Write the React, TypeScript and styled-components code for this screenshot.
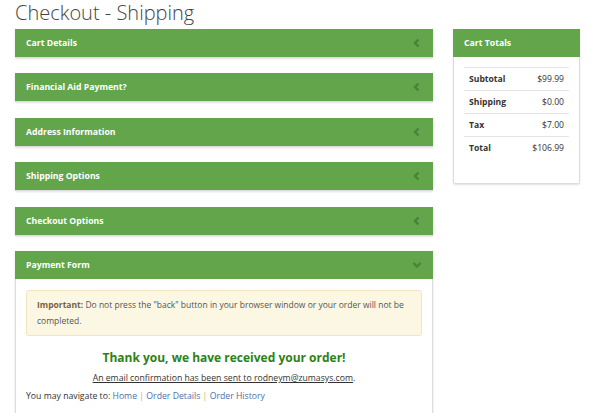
import React from "react";
import styled, { createGlobalStyle } from "styled-components";

const GlobalStyle = createGlobalStyle`
  body {
    margin: 0;
    background: #fff;
    font-family: "Open Sans", "Liberation Sans", sans-serif;
    color: #333;
  }
`;

const Page = styled.div`
  padding: 0 17px 0 15px;
`;

const Title = styled.h1`
  margin: 0;
  height: 28px;
  font-size: 20px;
  line-height: 26px;
  font-weight: 300;
  color: #444;
`;

const Layout = styled.div`
  display: grid;
  grid-template-columns: 418px 127px;
  column-gap: 20px;
  align-items: start;
  padding-top: 1px;
`;

const Column = styled.div`
  display: flex;
  flex-direction: column;
`;

const Panel = styled.div`
  margin-bottom: 15.4px;
  border: 1px solid #dcdcdc;
  border-top: none;
  box-shadow: 0 1px 2px rgba(0, 0, 0, 0.12);
  background: #fff;
`;

const PanelHeader = styled.div`
  display: flex;
  align-items: center;
  justify-content: space-between;
  height: 28px;
  margin: 0 -1px;
  padding: 0 11px 0 11px;
  background: #62a54b;
  color: #fff;
  font-size: 8.7px;
  font-weight: 700;
`;

const Chevron = ({ open }: { open?: boolean }) => (
  <svg width="10" height="10" viewBox="0 0 10 10">
    <polyline
      points={open ? "1.5,3 5,6.5 8.5,3" : "6.5,1.5 3,5 6.5,8.5"}
      fill="none"
      stroke="#4a8238"
      strokeWidth="2.4"
    />
  </svg>
);

const PanelBody = styled.div`
  padding: 11px 10px 10px 10px;
  font-size: 8.7px;
`;

const Alert = styled.div`
  background: #fcf7e3;
  border: 1px solid #f3e6bf;
  border-radius: 3px;
  padding: 6px 8px 6px 10px;
  font-size: 8.5px;
  line-height: 16px;
  color: #555;

  b {
    color: #7a6040;
    font-weight: 700;
  }
`;

const ThankYou = styled.h2`
  margin: 13px 0 0;
  text-align: center;
  font-size: 12px;
  font-weight: 700;
  color: #2c8216;
  line-height: 18px;
`;

const Confirmation = styled.p`
  margin: 3px 0 0;
  text-align: center;
  line-height: 16px;
  color: #333;

  span {
    text-decoration: underline;
  }
`;

const Nav = styled.p`
  margin: 2px 0 0;
  line-height: 16px;
  color: #333;
`;

const NavLink = styled.a`
  color: #4a6fa8;
  text-decoration: none;
`;

const Sep = styled.span`
  color: #e0a070;
`;

const TotalsCard = styled.div`
  border: 1px solid #dcdcdc;
  border-top: none;
  border-radius: 2px;
  box-shadow: 0 1px 2px rgba(0, 0, 0, 0.12);
  padding-bottom: 24px;
`;

const TotalsBody = styled.div`
  padding: 10px 10px 0 10px;
`;

const Row = styled.div`
  display: flex;
  justify-content: space-between;
  align-items: center;
  height: 22px;
  padding: 0 5px;
  border-top: 1px solid #e4e4e4;
  font-size: 8.6px;
`;

const Label = styled.span`
  font-weight: 700;
  color: #333;
`;

const Value = styled.span`
  color: #333;
`;

const collapsed = [
  "Cart Details",
  "Financial Aid Payment?",
  "Address Information",
  "Shipping Options",
  "Checkout Options",
];

const totals = [
  ["Subtotal", "$99.99"],
  ["Shipping", "$0.00"],
  ["Tax", "$7.00"],
  ["Total", "$106.99"],
];

export default function App() {
  return (
    <Page>
      <GlobalStyle />
      <Title>Checkout - Shipping</Title>
      <Layout>
        <Column>
          {collapsed.map((name) => (
            <Panel key={name}>
              <PanelHeader>
                {name}
                <Chevron />
              </PanelHeader>
            </Panel>
          ))}
          <Panel>
            <PanelHeader>
              Payment Form
              <Chevron open />
            </PanelHeader>
            <PanelBody>
              <Alert>
                <b>Important:</b> Do not press the "back" button in your browser
                window or your order will not be completed.
              </Alert>
              <ThankYou>Thank you, we have received your order!</ThankYou>
              <Confirmation>
                <span>An email confirmation has been sent to rodneym@zumasys.com</span>.
              </Confirmation>
              <Nav>
                You may navigate to: <NavLink>Home</NavLink> <Sep>|</Sep>{" "}
                <NavLink>Order Details</NavLink> <Sep>|</Sep>{" "}
                <NavLink>Order History</NavLink>
              </Nav>
            </PanelBody>
          </Panel>
        </Column>
        <TotalsCard>
          <PanelHeader>Cart Totals</PanelHeader>
          <TotalsBody>
            {totals.map(([k, v]) => (
              <Row key={k}>
                <Label>{k}</Label>
                <Value>{v}</Value>
              </Row>
            ))}
          </TotalsBody>
        </TotalsCard>
      </Layout>
    </Page>
  );
}
